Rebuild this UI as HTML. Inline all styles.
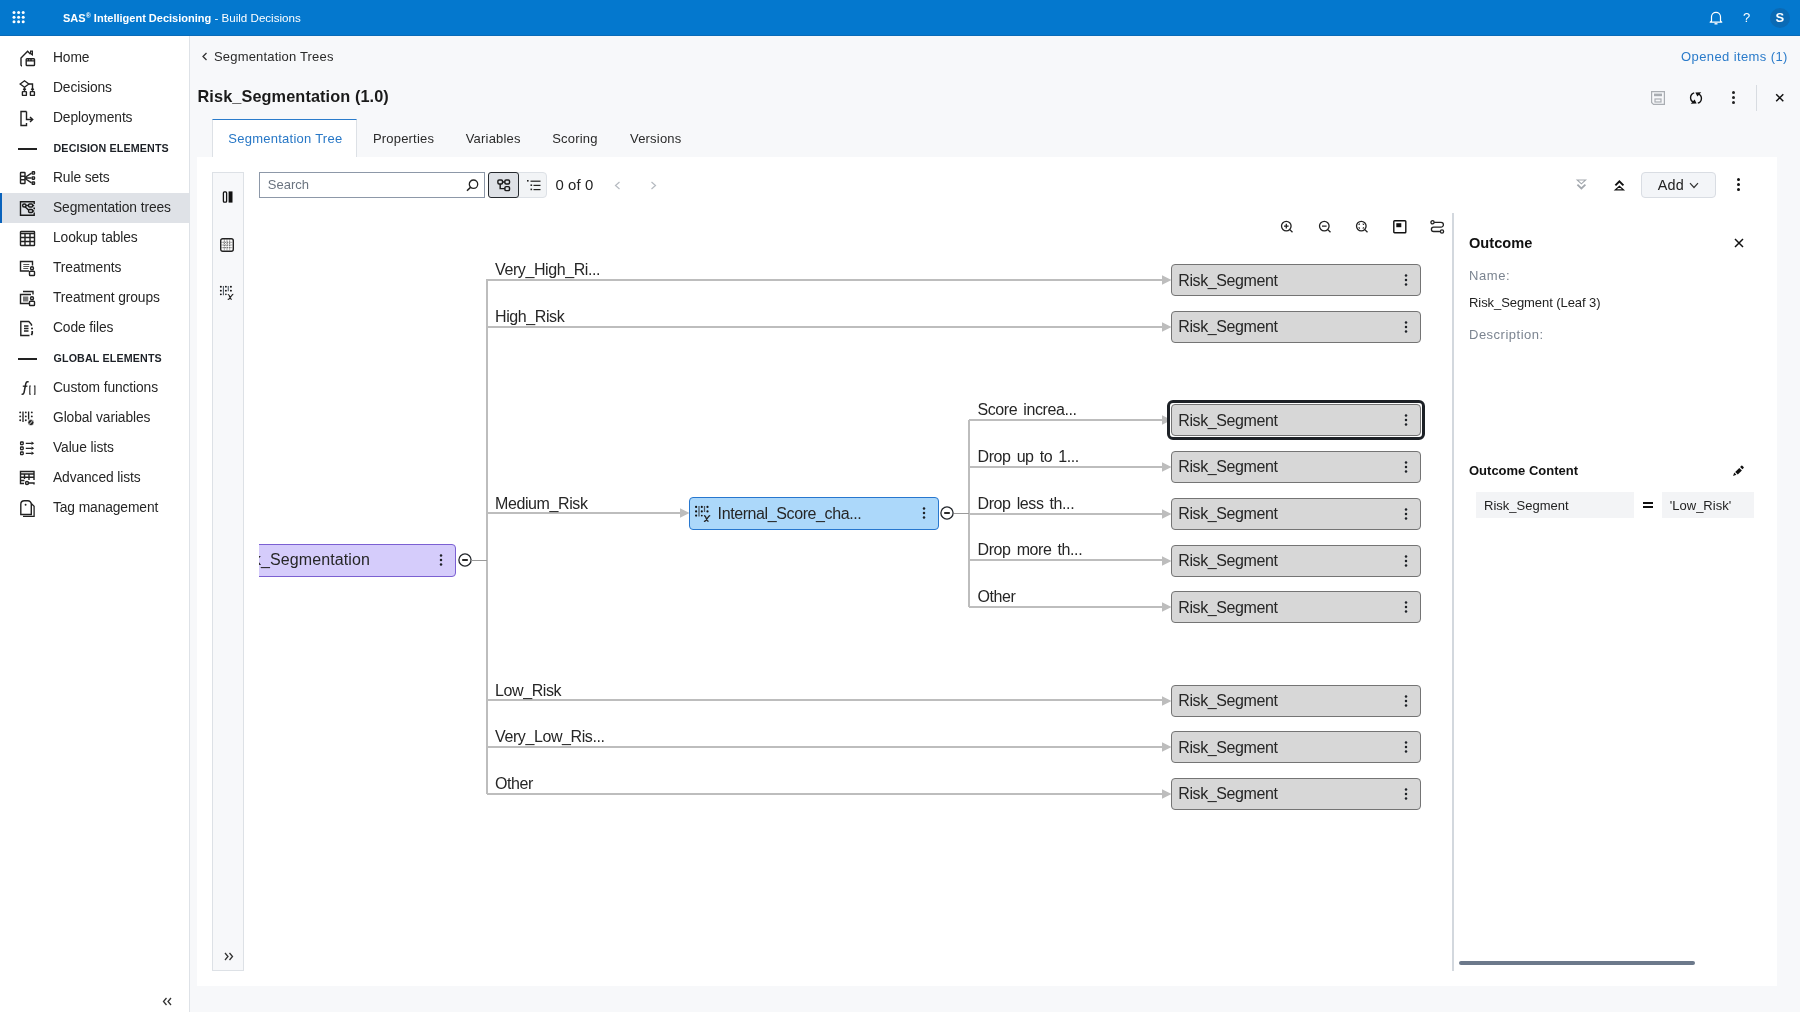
<!DOCTYPE html>
<html><head><meta charset="utf-8">
<style>
*{box-sizing:border-box}
html,body{margin:0;padding:0}
body{width:1800px;height:1012px;position:relative;overflow:hidden;background:#F7F8FA;font-family:"Liberation Sans",sans-serif;color:#252A31}
.a{position:absolute}
.t{position:absolute;white-space:nowrap;line-height:1}
svg{position:absolute;overflow:visible}
#hdr{left:0;top:0;width:1800px;height:36px;background:#0478CE;border-bottom:1px solid #0A6BB8}
#nav{left:0;top:36px;width:190px;height:976px;background:#FFFFFF;border-right:1px solid #DEE2E7}
.nt{font-size:13.8px;letter-spacing:-0.1px;color:#262626;left:53px}
.sec{font-size:10.7px;letter-spacing:0.15px;font-weight:700;color:#1C2026;left:53.5px}
</style></head><body>
<div id="root" style="position:absolute;left:0;top:0;width:1800px;height:1012px;overflow:hidden;will-change:transform;background:#F7F8FA">
<!-- HEADER -->
<div id="hdr" class="a">
  <svg width="14" height="14" style="left:11.8px;top:10px" viewBox="0 0 14 14">
    <g fill="#fff"><circle cx="2" cy="2.5" r="1.5"/><circle cx="6.6" cy="2.5" r="1.5"/><circle cx="11.2" cy="2.5" r="1.5"/>
    <circle cx="2" cy="7.2" r="1.5"/><circle cx="6.6" cy="7.2" r="1.5"/><circle cx="11.2" cy="7.2" r="1.5"/>
    <circle cx="2" cy="11.8" r="1.5"/><circle cx="6.6" cy="11.8" r="1.5"/><circle cx="11.2" cy="11.8" r="1.5"/></g>
  </svg>
  <div class="t" style="left:63px;top:11.5px;font-size:12px;color:#fff"><b style="font-size:11px;letter-spacing:0px">SAS<span style="font-size:7px;vertical-align:4px">®</span> Intelligent Decisioning</b><span style="font-size:11.6px"> - Build Decisions</span></div>
</div>
<!-- NAV -->
<div id="nav" class="a"></div>
<div class="a" style="left:0;top:193px;width:189px;height:30px;background:#DFE2E7"></div>
<div class="a" style="left:0;top:193px;width:2px;height:30px;background:#0A63BC"></div>
<svg width="17" height="17" viewBox="0 0 17 17" style="left:19px;top:50px" fill="none" stroke="#222" stroke-width="1.4"><path d="M2 15.8V8L8.6 1.3L11.3 4"/><path d="M2 15.8h1"/><path d="M11.6 1.2h1.8v3.6l-1.8-1.2z" stroke-width="1.2"/><rect x="7.2" y="8.7" width="8.3" height="6.8" rx="0.8"/><path d="M7.2 10.9h8.3M9.5 8.7v2.2M12 8.7v2.2"/></svg>
<div class="t nt" style="top:51.3px">Home</div>
<svg width="17" height="17" viewBox="0 0 17 17" style="left:19px;top:80px" fill="none" stroke="#222" stroke-width="1.4"><path d="M1.2 4L5.5 0.8L9.8 4L5.5 7.2z"/><path d="M5.5 7.2v2.8M4.2 8.8L5.5 10.2L6.8 8.8M9.8 4h3.7v6M12.2 8.8l1.3 1.4l1.3-1.4"/><rect x="3.4" y="11.6" width="4" height="3.8" rx="0.5"/><rect x="11.4" y="11.6" width="4" height="3.8" rx="0.5"/></svg>
<div class="t nt" style="top:81.3px">Decisions</div>
<svg width="17" height="17" viewBox="0 0 17 17" style="left:19px;top:110px" fill="none" stroke="#222" stroke-width="1.4"><path d="M7.5 1.5H2v14h5.5V13"/><path d="M7.5 1.5v8h6M11 7l2.7 2.5L11 12"/></svg>
<div class="t nt" style="top:111.3px">Deployments</div>
<div class="a" style="left:18px;top:148px;width:19px;height:1.6px;background:#222"></div>
<div class="t sec" style="top:142.7px">DECISION ELEMENTS</div>
<svg width="17" height="17" viewBox="0 0 17 17" style="left:19px;top:170px" fill="none" stroke="#222" stroke-width="1.4"><rect x="1.5" y="2.5" width="4.5" height="11" rx="0.5"/><path d="M1.5 6.2h4.5M1.5 9.8h4.5M6 7.5L12.5 3.2M6 8h6.5M6 8.5L12.5 12.8"/><rect x="13.2" y="1.8" width="2.3" height="2.3" rx="0.4"/><rect x="13.2" y="6.9" width="2.3" height="2.3" rx="0.4"/><rect x="13.2" y="12" width="2.3" height="2.3" rx="0.4"/></svg>
<div class="t nt" style="top:171.3px">Rule sets</div>
<svg width="17" height="17" viewBox="0 0 17 17" style="left:19px;top:200px" fill="none" stroke="#1A1A1A" stroke-width="1.4"><path d="M15.2 4V1.7H1.5V15.2H15.2V12.6"/><path d="M15.2 7.6v1.6" stroke-width="1.6"/><rect x="3.6" y="4" width="3.4" height="3" rx="1.5"/><rect x="9.6" y="4" width="4" height="3" rx="1"/><rect x="9.6" y="9.5" width="4" height="3" rx="1"/><path d="M7 5.5h2.6M6.2 7l3.4 3M13.6 5.5h1.6M13.6 11h1.6"/></svg>
<div class="t nt" style="top:201.3px">Segmentation trees</div>
<svg width="17" height="17" viewBox="0 0 17 17" style="left:19px;top:230px" fill="none" stroke="#222" stroke-width="1.4"><rect x="1.5" y="1.5" width="14" height="14" rx="0.5"/><path d="M1.5 3.5h14M1.5 7.5h14M1.5 11.5h14M6 3.5v12M11 3.5v12"/></svg>
<div class="t nt" style="top:231.3px">Lookup tables</div>
<svg width="17" height="17" viewBox="0 0 17 17" style="left:19px;top:260px" fill="none" stroke="#222" stroke-width="1.4"><path d="M10 11H1.5V1.5H13.5V5.5"/><path d="M4.3 4.5h6M4.3 6.5h6M4.3 8.5h5" stroke="#555" stroke-width="1.2"/><circle cx="13" cy="8.2" r="1.5"/><rect x="10.5" y="11.2" width="5" height="4.3" rx="0.8"/></svg>
<div class="t nt" style="top:261.3px">Treatments</div>
<svg width="17" height="17" viewBox="0 0 17 17" style="left:19px;top:290px" fill="none" stroke="#222" stroke-width="1.4"><path d="M4 1.5h10v3"/><path d="M10 13.5H1.5V4.5H12"/><rect x="4" y="6.5" width="5.3" height="5" fill="#777" stroke="none"/><circle cx="13" cy="8.2" r="1.5"/><rect x="10.5" y="11.2" width="5" height="4.3" rx="0.8"/></svg>
<div class="t nt" style="top:291.3px">Treatment groups</div>
<svg width="17" height="17" viewBox="0 0 17 17" style="left:19px;top:320px" fill="none" stroke="#222" stroke-width="1.4"><path d="M10.5 15.5H1.8V1.5H9.8L12.5 4.5V5.8"/><path d="M5 6h4.5M5 8.5h4.5M5 11h4.5" stroke-width="1.3"/><circle cx="13" cy="8.6" r="1" fill="#222" stroke="none"/><path d="M13.2 11v2.3l-0.8 1.8" stroke-width="1.7"/></svg>
<div class="t nt" style="top:321.3px">Code files</div>
<div class="a" style="left:18px;top:358px;width:19px;height:1.6px;background:#222"></div>
<div class="t sec" style="top:352.7px">GLOBAL ELEMENTS</div>
<svg width="17" height="17" viewBox="0 0 17 17" style="left:19px;top:380px" fill="none" stroke="#222" stroke-width="1.5"><path d="M9.6 2.1c-0.6-0.5-1.6-0.6-2.2 0.2c-0.6 0.8-0.9 2.3-1.2 4.2l-1.1 5.8c-0.3 1.4-0.9 2.2-2.5 1.9"/><path d="M3.8 6.2h4.6" stroke-width="1.3"/><path d="M11.8 6H10.8v8.2h1M14.9 6h1v8.2h-1" stroke-width="1.1"/></svg>
<div class="t nt" style="top:381.3px">Custom functions</div>
<svg width="17" height="17" viewBox="0 0 17 17" style="left:19px;top:410px" fill="none" stroke="#222"><g fill="#222" stroke="none"><circle cx="1.2" cy="2.4" r="0.95"/><circle cx="1.2" cy="6.4" r="0.95"/><circle cx="1.2" cy="10.3" r="0.95"/><circle cx="6.8" cy="2.4" r="0.95"/><circle cx="6.8" cy="6.4" r="0.95"/><circle cx="6.8" cy="10.3" r="0.95"/><circle cx="12.8" cy="2.4" r="0.95"/><circle cx="12.8" cy="6.4" r="0.95"/></g><path d="M4 1.5v10.5M9.6 1.5v8" stroke-width="1.3"/><circle cx="11.9" cy="12.6" r="3" fill="#222" stroke="#fff" stroke-width="0.6"/><path d="M10.3 14.2l3.2-3.2" stroke="#fff" stroke-width="1"/></svg>
<div class="t nt" style="top:411.3px">Global variables</div>
<svg width="17" height="17" viewBox="0 0 17 17" style="left:19px;top:440px" fill="none" stroke="#222" stroke-width="1.3"><rect x="1.6" y="2" width="2.6" height="2.6" rx="0.5"/><rect x="1.6" y="7" width="2.6" height="2.6" rx="0.5"/><rect x="1.6" y="12" width="2.6" height="2.6" rx="0.5"/><path d="M6.8 3.3h6M6.8 8.3h6M6.8 13.3h6" stroke-width="1.2"/><path d="M12.5 1.6L15.2 3.3L12.5 5zM12.5 6.6L15.2 8.3L12.5 10zM12.5 11.6L15.2 13.3L12.5 15z" fill="#222" stroke="none"/></svg>
<div class="t nt" style="top:441.3px">Value lists</div>
<svg width="17" height="17" viewBox="0 0 17 17" style="left:19px;top:470px" fill="none" stroke="#222" stroke-width="1.4"><path d="M5 13.5H1.5V1.5h13.5V10"/><path d="M1.5 4h13.5M1.5 7.3h13.5M5.5 4v5M10 4v6M1.5 10.5h4"/><circle cx="8" cy="13" r="1.5"/><path d="M9.5 13h5.5v1.5"/></svg>
<div class="t nt" style="top:471.3px">Advanced lists</div>
<svg width="17" height="17" viewBox="0 0 17 17" style="left:19px;top:500px" fill="none" stroke="#222" stroke-width="1.4"><path d="M1.8 14.5V4.2A3.5 3.5 0 0 1 5.3 0.8H8.7A3.5 3.5 0 0 1 12.3 4.2V14.5z"/><path d="M12.3 3.6l2.8 2.6V16.3H4" stroke-width="1.3"/><circle cx="6.6" cy="4.8" r="0.95" fill="#222" stroke="none"/></svg>
<div class="t nt" style="top:501.3px">Tag management</div>

<!-- HEADER RIGHT -->
<svg width="14" height="16" viewBox="0 0 14 16" style="left:1709px;top:10px" fill="none" stroke="#fff" stroke-width="1.2"><path d="M2.5 11V6.8A4.5 4.5 0 0 1 11.5 6.8V11l1.3 1.2H1.2z" stroke-linejoin="round"/><path d="M5.5 13.8h3" stroke-width="1.4"/></svg>
<div class="t" style="left:1743px;top:11px;font-size:13px;color:#fff">?</div>
<div class="a" style="left:1770px;top:7.5px;width:20px;height:20px;border-radius:50%;background:#0A6AB5"></div>
<div class="t" style="left:1775.5px;top:11px;font-size:13px;font-weight:700;color:#fff">S</div>

<!-- BREADCRUMB / TITLE -->
<svg width="8" height="9" viewBox="0 0 8 9" style="left:201px;top:52px" fill="none" stroke="#333" stroke-width="1.3"><path d="M5.5 1L2 4.5L5.5 8"/></svg>
<div class="t" style="left:214px;top:50px;font-size:13px;letter-spacing:0.18px;color:#2A2A2A">Segmentation Trees</div>
<div class="t" style="left:1681px;top:50px;font-size:13px;color:#2A7BCA;letter-spacing:0.4px">Opened items (1)</div>
<div class="t" style="left:197.5px;top:88px;font-size:16.3px;letter-spacing:0.1px;font-weight:700;color:#1A1A1A">Risk_Segmentation (1.0)</div>

<!-- title icons -->
<svg width="14" height="14" viewBox="0 0 14 14" style="left:1651px;top:91px" fill="none" stroke="#A9ADB2" stroke-width="1.2"><path d="M0.6 0.6H13.4V13.4H2.5L0.6 11.5z"/><rect x="3" y="2.6" width="8" height="2.6" fill="#A9ADB2" stroke="none"/><rect x="4" y="8" width="6" height="3"/></svg>
<svg width="14" height="14" viewBox="0 0 14 14" style="left:1689px;top:91px" fill="none" stroke="#111" stroke-width="1.4"><path d="M5.2 1.8A5 5 0 0 0 4.6 11.2"/><path d="M8.8 12.2A5 5 0 0 0 9.4 2.8"/><path d="M1.8 12.8L7.6 12.6L5.6 8.6z" fill="#111" stroke="none"/><path d="M12.2 1.2L6.4 1.4L8.4 5.4z" fill="#111" stroke="none"/></svg>
<div class="a" style="left:1731.8px;top:91px;width:3px;height:3px;border-radius:50%;background:#222"></div>
<div class="a" style="left:1731.8px;top:96px;width:3px;height:3px;border-radius:50%;background:#222"></div>
<div class="a" style="left:1731.8px;top:100.5px;width:3px;height:3px;border-radius:50%;background:#222"></div>
<div class="a" style="left:1756px;top:85px;width:1px;height:26px;background:#D8DCE1"></div>
<svg width="10" height="10" viewBox="0 0 10 10" style="left:1774.8px;top:93px" fill="none" stroke="#111" stroke-width="1.5"><path d="M1.2 1.2L8.3 8.3M8.3 1.2L1.2 8.3"/></svg>

<!-- TABS -->
<div class="a" style="left:212px;top:119px;width:144.5px;height:39px;background:#fff;border:1px solid #DDE1E6;border-top:1.5px solid #2A7BCB;border-bottom:none"></div>
<div class="t" style="left:228.3px;top:132px;font-size:13px;color:#2777C6;letter-spacing:0.25px">Segmentation Tree</div>
<div class="t" style="left:372.9px;top:132px;font-size:13px;letter-spacing:0.2px;color:#2A2A2A">Properties</div>
<div class="t" style="left:465.7px;top:132px;font-size:13px;letter-spacing:0.2px;color:#2A2A2A">Variables</div>
<div class="t" style="left:552.2px;top:132px;font-size:13px;letter-spacing:0.2px;color:#2A2A2A">Scoring</div>
<div class="t" style="left:630px;top:132px;font-size:13px;letter-spacing:0.2px;color:#2A2A2A">Versions</div>

<!-- WHITE PANEL -->
<div class="a" style="left:197px;top:157px;width:1580px;height:829px;background:#fff"></div>


<!-- LEFT VERTICAL TOOLBAR -->
<div class="a" style="left:212px;top:171.5px;width:32px;height:799.5px;background:#F7F8FA;border:1px solid #DDE1E6"></div>
<svg width="12" height="12" viewBox="0 0 12 12" style="left:221.5px;top:191px"><rect x="1.4" y="0.9" width="3.2" height="10.3" rx="1" fill="none" stroke="#111" stroke-width="1.3"/><rect x="6.6" y="0.4" width="3.9" height="11.2" fill="#111"/></svg>
<svg width="14" height="14" viewBox="0 0 14 14" style="left:220px;top:238px"><rect x="0.7" y="0.7" width="12.6" height="12.6" rx="2" fill="#fff" stroke="#222" stroke-width="1.4"/><path d="M4.3 1.5v11M7 1.5v11M9.7 1.5v11M1.5 4.3h11M1.5 7h11M1.5 9.7h11" stroke="#555" stroke-width="1" stroke-dasharray="1 0.8"/></svg>
<svg width="15" height="15" viewBox="0 0 17 17" style="left:218.5px;top:285px"><g fill="#111"><circle cx="2.1" cy="1.9" r="1.1"/><circle cx="2.1" cy="6.4" r="1.1"/><circle cx="2.1" cy="10.6" r="1.1"/><circle cx="7.8" cy="1.9" r="1.05"/><circle cx="7.8" cy="6.4" r="1.05"/><circle cx="7.8" cy="10.6" r="0.9"/><circle cx="13.5" cy="1.9" r="1.1"/><circle cx="13.5" cy="6.4" r="1.1"/></g><path d="M5 1v10.5M10.5 1v6" stroke="#4A5560" stroke-width="1.2"/><path d="M10 10.8c0.8-0.2 1.3 0.3 1.7 1.3l1.3 3.2c0.3 0.7 0.8 1 1.6 0.8M16.2 10.7c-0.6 0-1.2 0.4-1.8 1.2l-2.6 3.5c-0.5 0.7-1 1-1.9 0.9" stroke="#222" stroke-width="1.3" fill="none"/></svg>
<svg width="10" height="9" viewBox="0 0 10 9" style="left:223.5px;top:952px" fill="none" stroke="#333" stroke-width="1.3"><path d="M1 1l3 3.5L1 8M5.5 1l3 3.5L5.5 8"/></svg>
<svg width="10" height="9" viewBox="0 0 10 9" style="left:162px;top:996.5px" fill="none" stroke="#333" stroke-width="1.3"><path d="M4.5 1l-3 3.5L4.5 8M9 1l-3 3.5L9 8"/></svg>

<!-- SEARCH -->
<div class="a" style="left:259px;top:172px;width:225.5px;height:26px;border:1px solid #8D98A8;background:#fff"></div>
<div class="t" style="left:267.8px;top:178.4px;font-size:13px;color:#6B7480">Search</div>
<svg width="13" height="13" viewBox="0 0 13 13" style="left:465.5px;top:178.5px" fill="none" stroke="#222" stroke-width="1.3"><circle cx="7.5" cy="5.2" r="4.2"/><path d="M4.6 8.2L1 11.8" stroke-width="1.6"/></svg>
<!-- toggle -->
<div class="a" style="left:488.3px;top:172px;width:59px;height:26px;border:1px solid #DDE1E6;border-radius:4px;background:#F2F4F6"></div>
<div class="a" style="left:488.3px;top:172px;width:31px;height:26px;border:1.3px solid #262A2F;border-radius:3px;background:#DEE1E6"></div>
<svg width="14" height="13" viewBox="0 0 14 13" style="left:496.5px;top:178.5px" fill="none" stroke="#1A1A1A" stroke-width="1.45"><rect x="0.9" y="0.9" width="4.6" height="4" rx="1.2"/><rect x="7.9" y="0.9" width="4.6" height="4" rx="1.2"/><rect x="7.9" y="7.6" width="4.6" height="4" rx="1.2"/><path d="M5.5 2.9h2.4M3.2 4.9v4.7h4.7"/></svg>
<svg width="14" height="11" viewBox="0 0 14 11" style="left:526.5px;top:179.5px" fill="#222"><rect x="0" y="0" width="1.6" height="1.6"/><rect x="3.5" y="0.6" width="10" height="1.2"/><rect x="3.5" y="4.4" width="1.6" height="1.6"/><rect x="6.5" y="4.8" width="7" height="1.2"/><rect x="3.5" y="8.6" width="1.6" height="1.6"/><rect x="6.5" y="9" width="7" height="1.2"/></svg>
<div class="t" style="left:555.5px;top:177.5px;font-size:14.9px;color:#222222;letter-spacing:0.1px">0 of 0</div>
<svg width="7" height="9" viewBox="0 0 7 9" style="left:614px;top:181px" fill="none" stroke="#B5BAC0" stroke-width="1.2"><path d="M5.5 1L1.5 4.5L5.5 8"/></svg>
<svg width="7" height="9" viewBox="0 0 7 9" style="left:650px;top:181px" fill="none" stroke="#B5BAC0" stroke-width="1.2"><path d="M1.5 1L5.5 4.5L1.5 8"/></svg>

<!-- RIGHT TOOLBAR -->
<svg width="11" height="11" viewBox="0 0 11 11" style="left:1576.2px;top:179.3px" fill="none" stroke="#A3A8AE" stroke-width="1.1"><path d="M1.2 1h8.4L5.4 4.8z"/><path d="M1.4 5.6L5.4 9.4L9.4 5.6" stroke-width="1.8"/></svg>
<svg width="11" height="11" viewBox="0 0 11 11" style="left:1613.5px;top:179.5px" fill="none" stroke="#111" stroke-width="1.2"><path d="M1.3 9.8h8.2L5.4 6.2z"/><path d="M1.4 5.4L5.4 1.4L9.4 5.4" stroke-width="2"/></svg>
<div class="a" style="left:1641.4px;top:172px;width:74.5px;height:25.7px;border:1px solid #D9DDE3;border-radius:4px;background:#F3F5F8"></div>
<div class="t" style="left:1657.7px;top:178px;font-size:14.4px;letter-spacing:0.2px;color:#222222">Add</div>
<svg width="10" height="7" viewBox="0 0 10 7" style="left:1689px;top:181.5px" fill="none" stroke="#333" stroke-width="1.2"><path d="M1 1.2L5 5.5L9 1.2"/></svg>
<div class="a" style="left:1737.3px;top:177.8px;width:3px;height:3px;border-radius:50%;background:#111"></div>
<div class="a" style="left:1737.3px;top:183px;width:3px;height:3px;border-radius:50%;background:#111"></div>
<div class="a" style="left:1737.3px;top:188.2px;width:3px;height:3px;border-radius:50%;background:#111"></div>

<!-- CANVAS TOOLS -->
<svg width="14" height="14" viewBox="0 0 14 14" style="left:1280px;top:219.5px" fill="none" stroke="#222" stroke-width="1.3"><circle cx="6.3" cy="6.1" r="4.8"/><path d="M9.8 9.6L12.5 12.3M6.3 3.8v4.6M4 6.1h4.6"/></svg>
<svg width="14" height="14" viewBox="0 0 14 14" style="left:1317.5px;top:219.5px" fill="none" stroke="#222" stroke-width="1.3"><circle cx="6.3" cy="6.1" r="4.8"/><path d="M9.8 9.6L12.5 12.3M4 6.1h4.6"/></svg>
<svg width="14" height="14" viewBox="0 0 14 14" style="left:1355px;top:219.5px" fill="none" stroke="#222" stroke-width="1.3"><circle cx="6.3" cy="6.1" r="4.8"/><path d="M9.8 9.6L12.5 12.3"/><path d="M4 5V4h1M7.6 4h1v1M8.6 7.2v1h-1M5 8.2H4v-1" stroke-width="1"/></svg>
<svg width="14" height="14" viewBox="0 0 14 14" style="left:1392.5px;top:219.5px" fill="none" stroke="#111" stroke-width="1.4"><rect x="0.8" y="0.8" width="12" height="12" rx="0.8"/><rect x="3.3" y="3.2" width="5" height="4" fill="#111" stroke="none"/></svg>
<svg width="15" height="14" viewBox="0 0 15 14" style="left:1429.5px;top:219.5px" fill="none" stroke="#222" stroke-width="1.3"><circle cx="2.5" cy="2.3" r="1.6"/><circle cx="12" cy="11.5" r="1.6"/><path d="M4.1 2.3H11a2.4 2.4 0 0 1 0 4.8H3.6a2.2 2.2 0 0 0 0 4.4h6.8"/></svg>

<!-- TREE -->
<div class="a" style="left:259px;top:213px;width:1193px;height:758px;overflow:hidden">
<div class="a" style="left:227px;top:66.4px;width:2px;height:514.6px;background:#BDBDBD"></div>
<div class="a" style="left:709px;top:206.7px;width:2px;height:187.8px;background:#BDBDBD"></div>
<div class="a" style="left:228px;top:66px;width:676px;height:2px;background:#BDBDBD"></div>
<svg width="10" height="11" viewBox="0 0 10 11" style="left:902.5px;top:62.3px"><path d="M0 0.3L9.5 5L0 9.7z" fill="#BDBDBD"/></svg>
<div class="a" style="left:228px;top:113px;width:676px;height:2px;background:#BDBDBD"></div>
<svg width="10" height="11" viewBox="0 0 10 11" style="left:902.5px;top:109.0px"><path d="M0 0.3L9.5 5L0 9.7z" fill="#BDBDBD"/></svg>
<div class="a" style="left:228px;top:486px;width:676px;height:2px;background:#BDBDBD"></div>
<svg width="10" height="11" viewBox="0 0 10 11" style="left:902.5px;top:482.6px"><path d="M0 0.3L9.5 5L0 9.7z" fill="#BDBDBD"/></svg>
<div class="a" style="left:228px;top:533px;width:676px;height:2px;background:#BDBDBD"></div>
<svg width="10" height="11" viewBox="0 0 10 11" style="left:902.5px;top:529.3px"><path d="M0 0.3L9.5 5L0 9.7z" fill="#BDBDBD"/></svg>
<div class="a" style="left:228px;top:580px;width:676px;height:2px;background:#BDBDBD"></div>
<svg width="10" height="11" viewBox="0 0 10 11" style="left:902.5px;top:576.0px"><path d="M0 0.3L9.5 5L0 9.7z" fill="#BDBDBD"/></svg>
<div class="a" style="left:710px;top:206px;width:194px;height:2px;background:#BDBDBD"></div>
<svg width="10" height="11" viewBox="0 0 10 11" style="left:902.5px;top:202.4px"><path d="M0 0.3L9.5 5L0 9.7z" fill="#BDBDBD"/></svg>
<div class="a" style="left:710px;top:253px;width:194px;height:2px;background:#BDBDBD"></div>
<svg width="10" height="11" viewBox="0 0 10 11" style="left:902.5px;top:249.1px"><path d="M0 0.3L9.5 5L0 9.7z" fill="#BDBDBD"/></svg>
<div class="a" style="left:710px;top:300px;width:194px;height:2px;background:#BDBDBD"></div>
<svg width="10" height="11" viewBox="0 0 10 11" style="left:902.5px;top:295.8px"><path d="M0 0.3L9.5 5L0 9.7z" fill="#BDBDBD"/></svg>
<div class="a" style="left:710px;top:346px;width:194px;height:2px;background:#BDBDBD"></div>
<svg width="10" height="11" viewBox="0 0 10 11" style="left:902.5px;top:342.5px"><path d="M0 0.3L9.5 5L0 9.7z" fill="#BDBDBD"/></svg>
<div class="a" style="left:710px;top:393px;width:194px;height:2px;background:#BDBDBD"></div>
<svg width="10" height="11" viewBox="0 0 10 11" style="left:902.5px;top:389.2px"><path d="M0 0.3L9.5 5L0 9.7z" fill="#BDBDBD"/></svg>
<div class="a" style="left:228px;top:299px;width:193px;height:2px;background:#BDBDBD"></div>
<svg width="10" height="11" viewBox="0 0 10 11" style="left:420.5px;top:295.3px"><path d="M0 0.3L9.5 5L0 9.7z" fill="#BDBDBD"/></svg>
<div class="t" style="left:236.0px;top:49.2px;font-size:16.0px;letter-spacing:-0.4px;word-spacing:2px;color:#262626">Very_High_Ri...</div>
<div class="t" style="left:236.0px;top:95.9px;font-size:16.0px;letter-spacing:-0.4px;word-spacing:2px;color:#262626">High_Risk</div>
<div class="t" style="left:236.0px;top:282.7px;font-size:16.0px;letter-spacing:-0.4px;word-spacing:2px;color:#262626">Medium_Risk</div>
<div class="t" style="left:236.0px;top:469.5px;font-size:16.0px;letter-spacing:-0.4px;word-spacing:2px;color:#262626">Low_Risk</div>
<div class="t" style="left:236.0px;top:516.2px;font-size:16.0px;letter-spacing:-0.4px;word-spacing:2px;color:#262626">Very_Low_Ris...</div>
<div class="t" style="left:236.0px;top:562.9px;font-size:16.0px;letter-spacing:-0.4px;word-spacing:2px;color:#262626">Other</div>
<div class="t" style="left:718.5px;top:189.3px;font-size:16.0px;letter-spacing:-0.4px;word-spacing:2px;color:#262626">Score increa...</div>
<div class="t" style="left:718.5px;top:236.0px;font-size:16.0px;letter-spacing:-0.4px;word-spacing:2px;color:#262626">Drop up to 1...</div>
<div class="t" style="left:718.5px;top:282.7px;font-size:16.0px;letter-spacing:-0.4px;word-spacing:2px;color:#262626">Drop less th...</div>
<div class="t" style="left:718.5px;top:329.4px;font-size:16.0px;letter-spacing:-0.4px;word-spacing:2px;color:#262626">Drop more th...</div>
<div class="t" style="left:718.5px;top:376.1px;font-size:16.0px;letter-spacing:-0.4px;word-spacing:2px;color:#262626">Other</div>
<div class="a" style="left:912.0px;top:51.3px;width:250px;height:32px;border:1.7px solid #747474;border-radius:4px;background:#D7D7D7"></div>
<div class="t" style="left:919.3px;top:59.6px;font-size:16.0px;letter-spacing:-0.4px;word-spacing:2px;color:#262626">Risk_Segment</div>
<svg width="6" height="14" viewBox="0 0 6 14" style="left:1144.40px;top:60.30px"><g fill="#1E2227"><circle cx="3" cy="2.5" r="1.25"/><circle cx="3" cy="7" r="1.25"/><circle cx="3" cy="11.5" r="1.25"/></g></svg>
<div class="a" style="left:912.0px;top:98.0px;width:250px;height:32px;border:1.7px solid #747474;border-radius:4px;background:#D7D7D7"></div>
<div class="t" style="left:919.3px;top:106.3px;font-size:16.0px;letter-spacing:-0.4px;word-spacing:2px;color:#262626">Risk_Segment</div>
<svg width="6" height="14" viewBox="0 0 6 14" style="left:1144.40px;top:107.00px"><g fill="#1E2227"><circle cx="3" cy="2.5" r="1.25"/><circle cx="3" cy="7" r="1.25"/><circle cx="3" cy="11.5" r="1.25"/></g></svg>
<div class="a" style="left:912.0px;top:238.1px;width:250px;height:32px;border:1.7px solid #747474;border-radius:4px;background:#D7D7D7"></div>
<div class="t" style="left:919.3px;top:246.4px;font-size:16.0px;letter-spacing:-0.4px;word-spacing:2px;color:#262626">Risk_Segment</div>
<svg width="6" height="14" viewBox="0 0 6 14" style="left:1144.40px;top:247.10px"><g fill="#1E2227"><circle cx="3" cy="2.5" r="1.25"/><circle cx="3" cy="7" r="1.25"/><circle cx="3" cy="11.5" r="1.25"/></g></svg>
<div class="a" style="left:912.0px;top:284.8px;width:250px;height:32px;border:1.7px solid #747474;border-radius:4px;background:#D7D7D7"></div>
<div class="t" style="left:919.3px;top:293.1px;font-size:16.0px;letter-spacing:-0.4px;word-spacing:2px;color:#262626">Risk_Segment</div>
<svg width="6" height="14" viewBox="0 0 6 14" style="left:1144.40px;top:293.80px"><g fill="#1E2227"><circle cx="3" cy="2.5" r="1.25"/><circle cx="3" cy="7" r="1.25"/><circle cx="3" cy="11.5" r="1.25"/></g></svg>
<div class="a" style="left:912.0px;top:331.5px;width:250px;height:32px;border:1.7px solid #747474;border-radius:4px;background:#D7D7D7"></div>
<div class="t" style="left:919.3px;top:339.8px;font-size:16.0px;letter-spacing:-0.4px;word-spacing:2px;color:#262626">Risk_Segment</div>
<svg width="6" height="14" viewBox="0 0 6 14" style="left:1144.40px;top:340.50px"><g fill="#1E2227"><circle cx="3" cy="2.5" r="1.25"/><circle cx="3" cy="7" r="1.25"/><circle cx="3" cy="11.5" r="1.25"/></g></svg>
<div class="a" style="left:912.0px;top:378.2px;width:250px;height:32px;border:1.7px solid #747474;border-radius:4px;background:#D7D7D7"></div>
<div class="t" style="left:919.3px;top:386.5px;font-size:16.0px;letter-spacing:-0.4px;word-spacing:2px;color:#262626">Risk_Segment</div>
<svg width="6" height="14" viewBox="0 0 6 14" style="left:1144.40px;top:387.20px"><g fill="#1E2227"><circle cx="3" cy="2.5" r="1.25"/><circle cx="3" cy="7" r="1.25"/><circle cx="3" cy="11.5" r="1.25"/></g></svg>
<div class="a" style="left:912.0px;top:471.6px;width:250px;height:32px;border:1.7px solid #747474;border-radius:4px;background:#D7D7D7"></div>
<div class="t" style="left:919.3px;top:479.9px;font-size:16.0px;letter-spacing:-0.4px;word-spacing:2px;color:#262626">Risk_Segment</div>
<svg width="6" height="14" viewBox="0 0 6 14" style="left:1144.40px;top:480.60px"><g fill="#1E2227"><circle cx="3" cy="2.5" r="1.25"/><circle cx="3" cy="7" r="1.25"/><circle cx="3" cy="11.5" r="1.25"/></g></svg>
<div class="a" style="left:912.0px;top:518.3px;width:250px;height:32px;border:1.7px solid #747474;border-radius:4px;background:#D7D7D7"></div>
<div class="t" style="left:919.3px;top:526.6px;font-size:16.0px;letter-spacing:-0.4px;word-spacing:2px;color:#262626">Risk_Segment</div>
<svg width="6" height="14" viewBox="0 0 6 14" style="left:1144.40px;top:527.30px"><g fill="#1E2227"><circle cx="3" cy="2.5" r="1.25"/><circle cx="3" cy="7" r="1.25"/><circle cx="3" cy="11.5" r="1.25"/></g></svg>
<div class="a" style="left:912.0px;top:565.0px;width:250px;height:32px;border:1.7px solid #747474;border-radius:4px;background:#D7D7D7"></div>
<div class="t" style="left:919.3px;top:573.3px;font-size:16.0px;letter-spacing:-0.4px;word-spacing:2px;color:#262626">Risk_Segment</div>
<svg width="6" height="14" viewBox="0 0 6 14" style="left:1144.40px;top:574.00px"><g fill="#1E2227"><circle cx="3" cy="2.5" r="1.25"/><circle cx="3" cy="7" r="1.25"/><circle cx="3" cy="11.5" r="1.25"/></g></svg>
<div class="a" style="left:908.0px;top:187.1px;width:258px;height:40.3px;border:3px solid #1D2126;border-radius:6px;background:#fff"></div>
<div class="a" style="left:912.0px;top:191.4px;width:250px;height:32px;border:1.7px solid #747474;border-radius:4px;background:#D7D7D7"></div>
<div class="t" style="left:919.3px;top:199.7px;font-size:16.0px;letter-spacing:-0.4px;word-spacing:2px;color:#262626">Risk_Segment</div>
<svg width="6" height="14" viewBox="0 0 6 14" style="left:1144.40px;top:200.40px"><g fill="#1E2227"><circle cx="3" cy="2.5" r="1.25"/><circle cx="3" cy="7" r="1.25"/><circle cx="3" cy="11.5" r="1.25"/></g></svg>
<div class="a" style="left:-109.0px;top:331.2px;width:306px;height:32.6px;border:1.8px solid #7B60D2;border-radius:4px;background:#D5CCFB"></div>
<div class="t" style="left:-29.5px;top:338.9px;font-size:16.0px;letter-spacing:0.1px;word-spacing:2px;color:#262626">Risk_Segmentation</div>
<svg width="6" height="14" viewBox="0 0 6 14" style="left:179.40px;top:340.20px"><g fill="#1E2227"><circle cx="3" cy="2.5" r="1.25"/><circle cx="3" cy="7" r="1.25"/><circle cx="3" cy="11.5" r="1.25"/></g></svg>
<svg width="16" height="16" viewBox="0 0 16 16" style="left:197.6px;top:339.3px"><circle cx="8" cy="8" r="6.1" fill="#fff" stroke="#23272C" stroke-width="1.3"/><path d="M5.2 8h5.6" stroke="#111" stroke-width="1.8"/></svg>
<div class="a" style="left:212.2px;top:346.8px;width:15.8px;height:1px;background:#9A9A9A"></div>
<div class="a" style="left:429.7px;top:284.4px;width:250.3px;height:32.3px;border:1.8px solid #2777CF;border-radius:4px;background:#ACD8FA"></div>
<svg width="17" height="17" viewBox="0 0 17 17" style="left:435.0px;top:292.0px"><g fill="#111"><circle cx="2.1" cy="1.9" r="1.1"/><circle cx="2.1" cy="6.4" r="1.1"/><circle cx="2.1" cy="10.6" r="1.1"/><circle cx="7.8" cy="1.9" r="1.05"/><circle cx="7.8" cy="6.4" r="1.05"/><circle cx="7.8" cy="10.6" r="0.9"/><circle cx="13.5" cy="1.9" r="1.1"/><circle cx="13.5" cy="6.4" r="1.1"/></g><path d="M5 1v10.5M10.5 1v6" stroke="#4A5560" stroke-width="1.2"/><path d="M10 10.8c0.8-0.2 1.3 0.3 1.7 1.3l1.3 3.2c0.3 0.7 0.8 1 1.6 0.8M16.2 10.7c-0.6 0-1.2 0.4-1.8 1.2l-2.6 3.5c-0.5 0.7-1 1-1.9 0.9" stroke="#222" stroke-width="1.3" fill="none"/></svg>
<div class="t" style="left:458.6px;top:293.1px;font-size:16.0px;letter-spacing:-0.4px;word-spacing:2px;color:#262626">Internal_Score_cha...</div>
<svg width="6" height="14" viewBox="0 0 6 14" style="left:661.90px;top:293.20px"><g fill="#1E2227"><circle cx="3" cy="2.5" r="1.25"/><circle cx="3" cy="7" r="1.25"/><circle cx="3" cy="11.5" r="1.25"/></g></svg>
<svg width="16" height="16" viewBox="0 0 16 16" style="left:680.3px;top:292.1px"><circle cx="8" cy="8" r="6.1" fill="#fff" stroke="#23272C" stroke-width="1.3"/><path d="M5.2 8h5.6" stroke="#111" stroke-width="1.8"/></svg>
<div class="a" style="left:694.9px;top:299.6px;width:15.1px;height:1px;background:#9A9A9A"></div>
</div>
<!-- RIGHT PANEL -->
<div class="a" style="left:1452px;top:213px;width:1.5px;height:758px;background:#D3D8DE"></div>
<div class="t" style="left:1469px;top:235.5px;font-size:14.6px;font-weight:700;color:#111">Outcome</div>
<svg width="10" height="10" viewBox="0 0 10 10" style="left:1734px;top:237.5px" fill="none" stroke="#111" stroke-width="1.5"><path d="M1 1L9 9M9 1L1 9"/></svg>
<div class="t" style="left:1469px;top:268.8px;font-size:13px;letter-spacing:0.6px;color:#7B8490">Name:</div>
<div class="t" style="left:1469px;top:296.2px;font-size:13px;color:#222222;letter-spacing:-0.07px">Risk_Segment (Leaf 3)</div>
<div class="t" style="left:1469px;top:327.7px;font-size:13px;color:#7B8490;letter-spacing:0.5px">Description:</div>
<div class="t" style="left:1469px;top:464.4px;font-size:13px;font-weight:700;color:#111">Outcome Content</div>
<svg width="14" height="14" viewBox="0 0 14 14" style="left:1732px;top:463px" fill="#111"><path d="M1.1 12.9L2.2 9.6L4.4 11.8z"/><path d="M3.2 9.0L7.3 4.9L9.9 7.5L5.8 11.6z"/><path d="M8.1 3.9L9.3 2.7Q9.8 2.2 10.3 2.7L11.6 4Q12.1 4.5 11.6 5L10.4 6.2z"/></svg>
<div class="a" style="left:1476px;top:492px;width:158px;height:26px;background:#F3F4F6"></div>
<div class="t" style="left:1484px;top:498.8px;font-size:13px;color:#222222">Risk_Segment</div>
<div class="a" style="left:1643px;top:502px;width:10px;height:2px;background:#111"></div>
<div class="a" style="left:1643px;top:506.3px;width:10px;height:2px;background:#111"></div>
<div class="a" style="left:1662px;top:492px;width:92px;height:26px;background:#F3F4F6"></div>
<div class="t" style="left:1669.8px;top:498.8px;font-size:13px;color:#222222">'Low_Risk'</div>
<div class="a" style="left:1459px;top:961px;width:236px;height:4px;border-radius:2px;background:#6C798B"></div>

</div>
</body></html>
